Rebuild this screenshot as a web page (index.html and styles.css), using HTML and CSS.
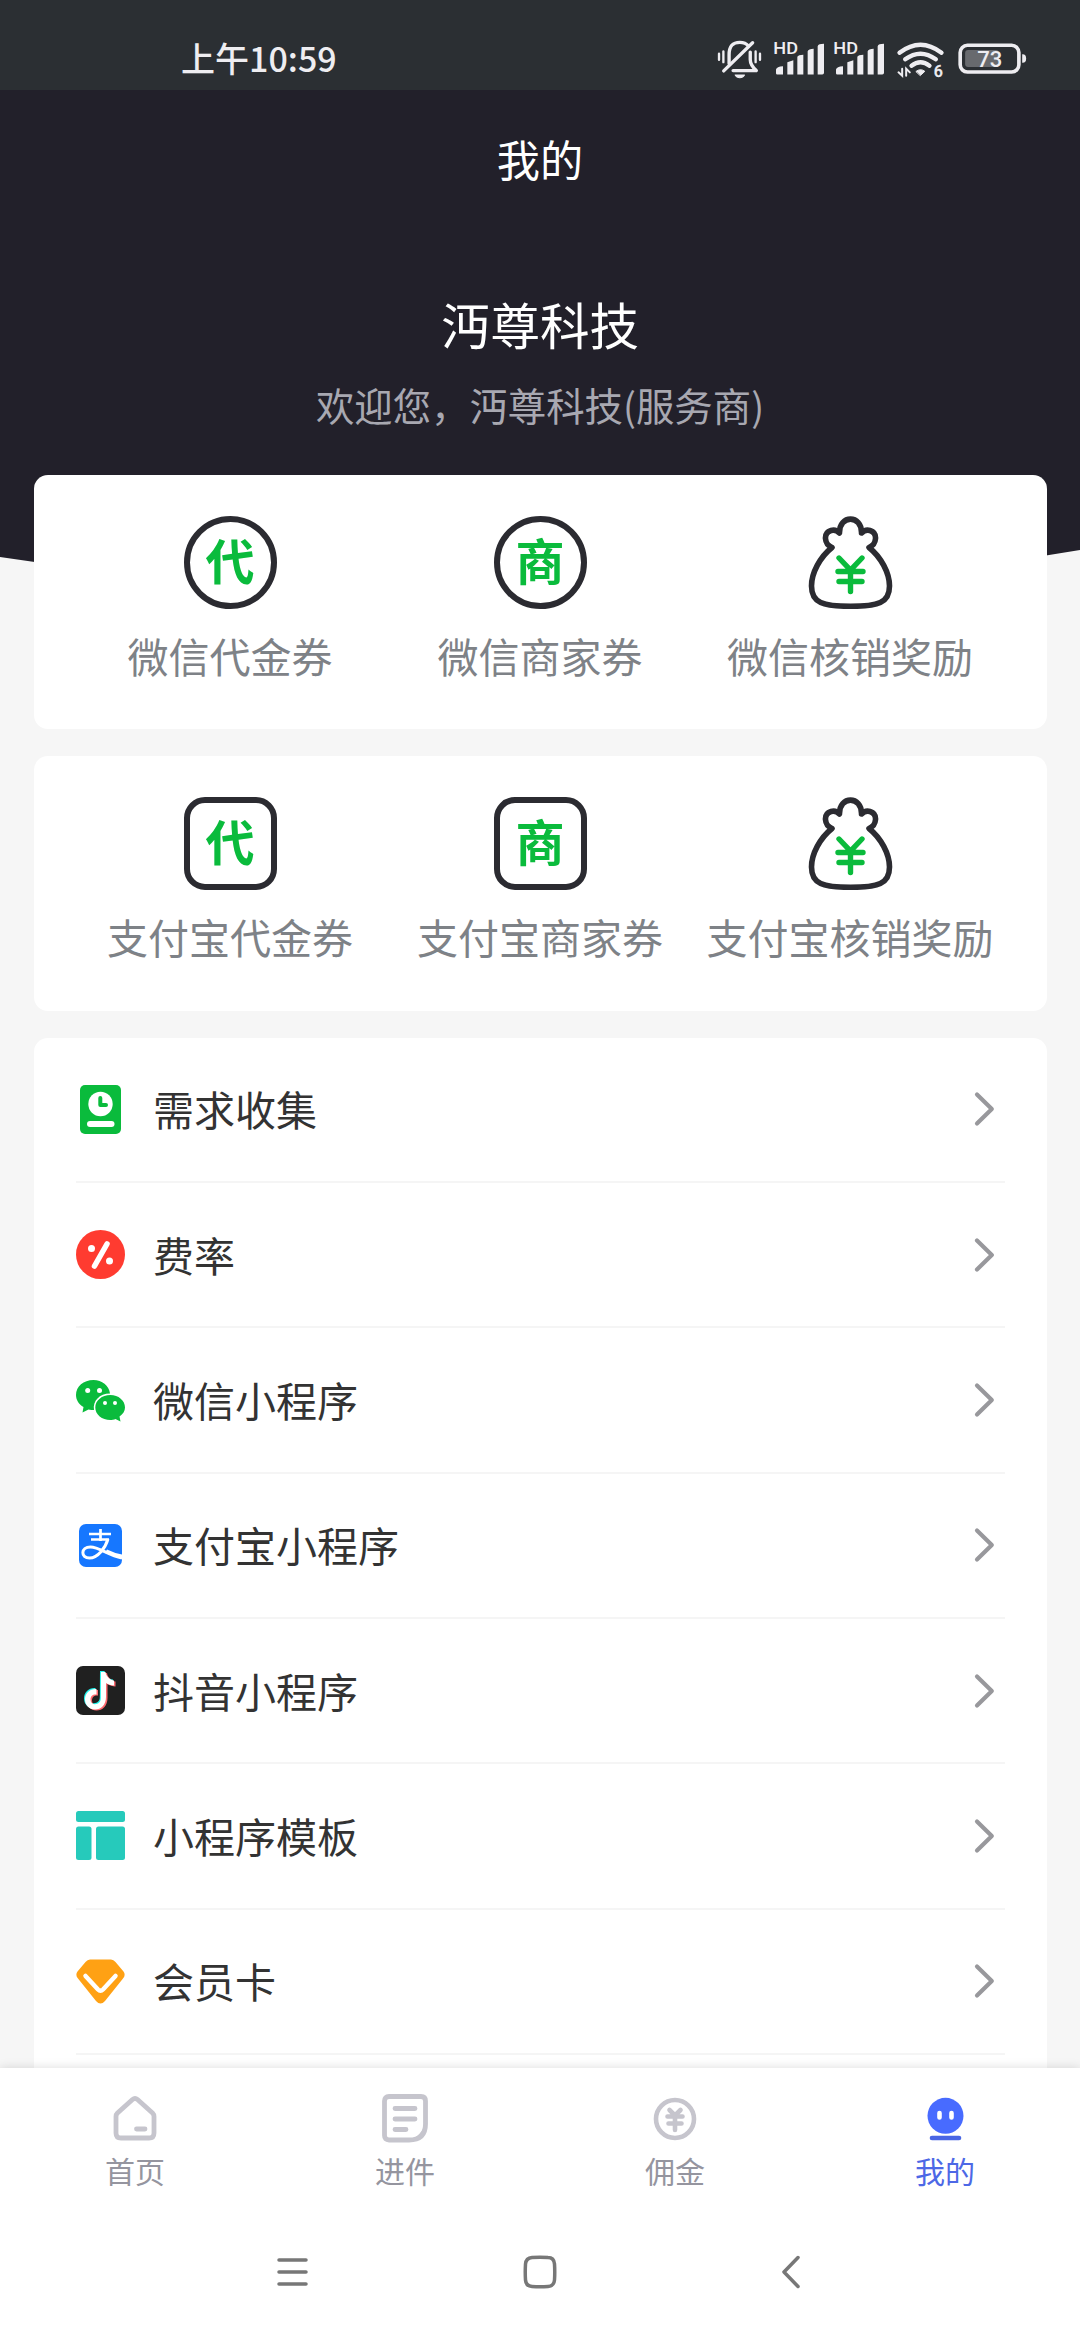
FILE: index.html
```html
<!DOCTYPE html>
<html lang="zh-CN">
<head>
<meta charset="utf-8">
<title>我的</title>
<link rel="stylesheet" href="styles.css">
</head>
<body>
<svg width="0" height="0" class="defs">
  <symbol id="bag" viewBox="0 0 93 93">
    <path d="M28 31.500C20 28 19 17 27 14.500C30 13.700 33 14.300 35.500 17C35 -1.500 58 -1.500 57.500 17C60 14.300 63 13.700 66 14.500C74 17 73 28 65 31.500C77 41 85.500 57 85.500 70C85.500 87 74 90.300 46.500 90.300C19 90.300 7.500 87 7.500 70C7.500 57 16 41 28 31.500Z" fill="none" stroke="#2b2b31" stroke-width="5.600" stroke-linejoin="round"/>
    <path d="M35 42L46.500 54L58 42M34 55.500H59M35 65.500H58M46.500 55V75.500" fill="none" stroke="#0abb3c" stroke-width="5.400" stroke-linecap="round"/>
  </symbol>
  <symbol id="chevron" viewBox="0 0 24 36">
    <path d="M5 3.500L19.800 18L5 32.500" fill="none" stroke="#98989c" stroke-width="4.200" stroke-linecap="round" stroke-linejoin="round"/>
  </symbol>
  <symbol id="note" viewBox="0 0 30 40">
    <path d="M16 1H20.500C21 5 24.500 9 29 9.500V14.500C26 14.500 23 13.300 21 12V26C21 34 16 38.500 10 38.500C4 38.500 0 34 0 28.500C0 22 5 17.500 11.500 18V23.500C8 23 5.500 25 5.500 28.500C5.500 31.500 7.500 33.200 10 33.200C13.500 33.200 15.800 31 15.800 27Z"/>
  </symbol>
</svg>

<header class="status">
  <time class="clock">上午10:59</time>
  <div class="signals">
    <svg class="bell" viewBox="112 62 134 116" fill="none" stroke="#eeedf1" stroke-linecap="round" stroke-linejoin="round">
      <path d="M148 132V106C148 78 160 69 180 69C192 69 200 73 206 80M211 98V120C211 133 218 143 229 153H160" stroke-width="10"/>
      <path d="M218 70L132 154" stroke-width="10"/>
      <path d="M118 103V121M131 96V128M227 96V128M240 103V121" stroke-width="7"/>
      <path d="M166 166H194C188 177 172 177 166 166Z" fill="#eeedf1" stroke-width="3"/>
    </svg>
    <svg class="bars" viewBox="282 68 150 98" fill="#eeedf1">
      <text x="280" y="104" font-size="48" textLength="74" lengthAdjust="spacingAndGlyphs">HD</text>
      <path d="M288 150Q290 141 309 140V165H292Q288 165 288 161ZM322 128L340 122V165H322ZM352 112Q355 106 370 106V165H352ZM383 95Q385 89 401 88V165H383ZM413 80Q415 73 432 73V160Q432 165 427 165H413Z"/>
    </svg>
    <svg class="bars second" viewBox="282 68 150 98" fill="#eeedf1">
      <text x="280" y="104" font-size="48" textLength="74" lengthAdjust="spacingAndGlyphs">HD</text>
      <path d="M288 150Q290 141 309 140V165H292Q288 165 288 161ZM322 128L340 122V165H322ZM352 112Q355 106 370 106V165H352ZM383 95Q385 89 401 88V165H383ZM413 80Q415 73 432 73V160Q432 165 427 165H413Z"/>
    </svg>
    <svg class="wifi" viewBox="650 66 140 108" fill="none" stroke="#eeedf1" stroke-linecap="round">
      <path d="M657 98Q720 50 783 98M674 118Q720 84 766 118M693 137Q720 117 747 137" stroke-width="13"/>
      <path d="M707 154Q720 144 733 154L720 166Z" fill="#eeedf1" stroke-width="3"/>
      <path d="M654 157L665 167V146M677 167V146L688 157" stroke-width="6"/>
      <text x="760" y="171" font-size="48" fill="#eeedf1" stroke="#eeedf1" stroke-width="1">6</text>
    </svg>
    <svg class="battery" viewBox="832 70 208 94">
      <rect x="838" y="77" width="178" height="81" rx="22" fill="none" stroke="#eeedf1" stroke-width="11"/>
      <rect x="853" y="91" width="102" height="52" rx="9" fill="#686a6e"/>
      <path d="M1026 104Q1038 103 1038 117T1026 130Z" fill="#eeedf1"/>
      <text x="928" y="143" font-size="67" fill="#eeedf1" text-anchor="middle">73</text>
    </svg>
  </div>
</header>

<main class="screen">
  <section class="hero">
    <h1>我的</h1>
    <h2>沔尊科技</h2>
    <p>欢迎您，沔尊科技(服务商)</p>
  </section>

  <div class="content">
    <section class="card grid">
      <a class="entry"><span class="badge round">代</span><span>微信代金券</span></a>
      <a class="entry"><span class="badge round">商</span><span>微信商家券</span></a>
      <a class="entry"><svg class="bag"><use href="#bag"/></svg><span>微信核销奖励</span></a>
    </section>
    <section class="card grid">
      <a class="entry"><span class="badge">代</span><span>支付宝代金券</span></a>
      <a class="entry"><span class="badge">商</span><span>支付宝商家券</span></a>
      <a class="entry"><svg class="bag"><use href="#bag"/></svg><span>支付宝核销奖励</span></a>
    </section>

    <section class="card list">
      <a class="row">
        <svg class="icon" viewBox="0 0 49 49"><rect x="4" y="0" width="41" height="49" rx="5" fill="#0abb3c"/><circle cx="24.500" cy="19" r="12.200" fill="#fff"/><path d="M24.300 13V20H30" fill="none" stroke="#0abb3c" stroke-width="4" stroke-linecap="round" stroke-linejoin="round"/><path d="M14 39H35.500" stroke="#fff" stroke-width="6" stroke-linecap="round"/></svg>
        <span>需求收集</span><svg class="chevron"><use href="#chevron"/></svg>
      </a>
      <a class="row">
        <svg class="icon" viewBox="0 0 49 49"><circle cx="24.500" cy="24.500" r="24.500" fill="#ff3b30"/><path d="M31 14L18.500 36" stroke="#fff" stroke-width="5.500" stroke-linecap="round"/><circle cx="15.500" cy="18.500" r="3.500" fill="#fff"/><circle cx="33.500" cy="31" r="3.500" fill="#fff"/></svg>
        <span>费率</span><svg class="chevron"><use href="#chevron"/></svg>
      </a>
      <a class="row">
        <svg class="icon" viewBox="0 0 49 49"><path d="M17.500 4C7.500 4 0 10.500 0 19C0 24 3 28.500 7.500 31L6.500 36.500L12.500 33.500C14.500 34 16.500 34 18 34C16.500 25 23.500 17.500 34 17.500C33 9.500 26 4 17.500 4Z" fill="#0abb3c"/><path d="M34.300 19C26 19 19.300 24.500 19.300 31.500S26 44 34.300 44C36 44 38 43.600 39.500 43L44.500 45.500L43.500 40.500C47 38 49 35 49 31.500C49 24.500 42.500 19 34.300 19Z" fill="#0abb3c"/><g fill="#fff"><circle cx="11.700" cy="14.500" r="2.500"/><circle cx="23.500" cy="14.500" r="2.500"/><circle cx="29" cy="27" r="2"/><circle cx="39" cy="27" r="2"/></g></svg>
        <span>微信小程序</span><svg class="chevron"><use href="#chevron"/></svg>
      </a>
      <a class="row">
        <svg class="icon" viewBox="0 0 49 49"><rect x="3" y="3" width="43" height="43" rx="7" fill="#1677ff"/><path d="M24.500 8V20M13 13H35M15 18.500H33" fill="none" stroke="#fff" stroke-width="2.700"/><path d="M32 18C29.500 26.500 22 37 13.500 37C4.500 37 4.500 26 14.500 26C23 26 32 34 46 37" fill="none" stroke="#fff" stroke-width="3"/><path d="M31 28.500Q38 32 46 33.500V38L29 32Z" fill="#fff"/></svg>
        <span>支付宝小程序</span><svg class="chevron"><use href="#chevron"/></svg>
      </a>
      <a class="row">
        <svg class="icon" viewBox="0 0 49 49"><rect width="49" height="49" rx="7" fill="#202020"/><use href="#note" x="8" y="4" width="30" height="40" fill="#25f4ee"/><use href="#note" x="10.500" y="6" width="30" height="40" fill="#fe6a70"/><use href="#note" x="9" y="5" width="30" height="40" fill="#fff"/></svg>
        <span>抖音小程序</span><svg class="chevron"><use href="#chevron"/></svg>
      </a>
      <a class="row">
        <svg class="icon" viewBox="0 0 49 49" fill="#26cabb"><rect width="49" height="11" rx="2.500"/><rect y="15.500" width="15.500" height="33.500" rx="2.500"/><rect x="20" y="15.500" width="29" height="33.500" rx="2.500"/></svg>
        <span>小程序模板</span><svg class="chevron"><use href="#chevron"/></svg>
      </a>
      <a class="row">
        <svg class="icon" viewBox="0 0 49 49"><path d="M14 2.500H35Q37.500 2.500 39.500 5L47.500 14.500Q50 18 47 21.500L29 44Q24.500 49 20 44L2 21.500Q-1 18 1.500 14.500L9.500 5Q11.500 2.500 14 2.500Z" fill="#ffa114"/><path d="M9.500 19L22 32.500Q24.500 35 27 32.500L39.500 19" fill="none" stroke="#fff" stroke-width="4.500" stroke-linecap="round"/></svg>
        <span>会员卡</span><svg class="chevron"><use href="#chevron"/></svg>
      </a>
    </section>
  </div>
</main>

<nav class="tabs">
  <a class="tab"><svg viewBox="0 0 50 50" fill="none" stroke="#c6c5cd" stroke-width="4.800" stroke-linejoin="round" stroke-linecap="round"><path d="M22.500 6.500Q25 4.300 27.500 6.500L42.500 20Q44 21.500 44 23.500V40Q44 45 39 45H11Q6 45 6 40V23.500Q6 21.500 7.500 20Z"/><path d="M26.500 36H35"/></svg><span>首页</span></a>
  <a class="tab"><svg viewBox="0 0 50 50" fill="none" stroke="#c6c5cd" stroke-width="4.800" stroke-linejoin="round" stroke-linecap="round"><path d="M9 3.500H41Q45.500 3.500 45.500 8V31Q45.500 47 29 47H9Q4.500 47 4.500 42.500V8Q4.500 3.500 9 3.500Z"/><path d="M45 34Q41 43 33 47H29Q45.500 47 45.500 31Z" fill="#c6c5cd" stroke-width="2"/><path d="M15 15.500H35M15 26H35M15 36.500H26"/></svg><span>进件</span></a>
  <a class="tab"><svg viewBox="0 0 50 50" fill="none" stroke="#c6c5cd" stroke-width="4.600" stroke-linecap="round"><circle cx="25" cy="26" r="19"/><path d="M19.500 17L25 22.500L30.500 17M17.500 23.500H32.500M18.500 30.500H31.500M25 23V37"/></svg><span>佣金</span></a>
  <a class="tab active"><svg viewBox="0 0 50 50"><circle cx="25.500" cy="22.800" r="18" fill="#486bff"/><path d="M12 45H39" stroke="#4a66e4" stroke-width="4.600" stroke-linecap="round"/><path d="M19.500 20V24.500M31.500 20V24.500" stroke="#fff" stroke-width="4.600" stroke-linecap="round"/></svg><span>我的</span></a>
</nav>

<footer class="system">
  <svg viewBox="0 0 34 34"><path d="M4 5H31M4 17H31M4 29H31"/></svg>
  <svg viewBox="0 0 34 34"><path d="M9 2.500Q17 1.800 25 2.500Q31 2.500 31.500 9Q32 17 31.500 25Q31 31 25 31.500Q17 32 9 31.500Q3 31 2.500 25Q2 17 2.500 9Q3 3 9 2.500Z"/></svg>
  <svg viewBox="0 0 34 34"><path d="M27 2.500L13 17L27 31.500"/></svg>
</footer>
</body>
</html>
```

FILE: styles.css
```css
* { box-sizing: border-box; }

body {
  margin: 0;
  width: 1080px;
  height: 2340px;
  overflow: hidden;
  display: flex;
  flex-direction: column;
  background: #f6f6f6;
  font-family: "Noto Sans CJK SC", sans-serif;
}

svg { display: block; flex: none; }
.defs { display: none; }

.status {
  flex: none;
  height: 90px;
  padding: 0 53px 0 181px;
  display: flex;
  align-items: flex-start;
  justify-content: space-between;
  background: #2b2f33;
  color: #eeedf1;
}
.clock { margin-top: 33px; font-size: 34px; line-height: 50px; font-weight: 500; }
.signals { display: flex; align-items: flex-start; font-family: Roboto, sans-serif; font-weight: 500; }
.signals svg { overflow: visible; }
.bell { width: 45px; height: 39px; margin: 40px 12px 0 0; }
.bars { width: 50px; height: 33px; margin: 42px 10px 0 0; }
.second { margin-right: 13px; }
.wifi { width: 47px; height: 36px; margin: 42px 14px 0 0; }
.battery { width: 69px; height: 31px; margin-top: 43px; }

.screen {
  flex: none;
  height: 1978px;
  overflow: hidden;
  display: flex;
  flex-direction: column;
}

.hero {
  flex: none;
  height: 480px;
  background: #22202a;
  clip-path: path("M0 0H1080V460Q540 550 0 467Z");
  color: #fff;
  text-align: center;
}
.hero h1, .hero h2, .hero p { margin: 0; font-weight: 400; }
.hero h1 { padding-top: 33px; font-size: 43.2px; line-height: 70px; }
.hero h2 { padding-top: 95px; font-size: 49.5px; line-height: 72px; }
.hero p { padding-top: 14px; font-size: 38.4px; line-height: 60px; color: #a8a8b1; }

.content {
  flex: 1;
  min-height: 0;
  position: relative;
  margin-top: -95px;
  padding: 0 33px 0 34px;
  display: flex;
  flex-direction: column;
  gap: 27px;
}
.card { flex: none; background: #fff; border-radius: 14px; }

.grid {
  height: 254.400px;
  padding: 41px 42px 0 41px;
  display: grid;
  grid-template-columns: repeat(3, 310px);
}
.entry {
  display: flex;
  flex-direction: column;
  align-items: center;
  gap: 16px;
  font-size: 41px;
  line-height: 60px;
  color: #7e8287;
  white-space: nowrap;
}
.badge {
  width: 93px;
  height: 93px;
  padding-bottom: 7px;
  border: 6px solid #2b2b31;
  border-radius: 21px;
  display: flex;
  align-items: center;
  justify-content: center;
  color: #0abb3c;
  font-size: 49px;
  font-weight: 700;
}
.round { border-radius: 50%; }
.bag { width: 93px; height: 93px; }

.list { flex: 1; min-height: 0; padding: 0 42px; border-radius: 14px 14px 0 0; }
.row {
  height: 145.300px;
  border-bottom: 2px solid #f5f5f5;
  display: flex;
  align-items: center;
  gap: 28px;
  color: #333;
  font-size: 41px;
  line-height: 60px;
}
.row span { flex: 1; padding-bottom: 2px; }
.icon { width: 49px; height: 49px; }
.chevron { width: 24px; height: 36px; margin-right: 9px; }

.tabs {
  flex: none;
  height: 136px;
  padding-top: 25px;
  display: grid;
  grid-template-columns: repeat(4, 270px);
  position: relative;
  background: #fff;
  box-shadow: 0 0 10px rgba(0, 0, 0, .14);
}
.tab {
  display: flex;
  flex-direction: column;
  align-items: center;
  gap: 5px;
  color: #95959f;
  font-size: 30px;
  line-height: 44px;
}
.tab svg { width: 50px; height: 50px; }
.active { color: #4d68e6; }

.system {
  flex: 1;
  position: relative;
  padding: 51px 275px 0;
  display: flex;
  align-items: flex-start;
  justify-content: space-between;
  background: #fff;
}
.system svg {
  width: 34px;
  height: 34px;
  fill: none;
  stroke: #777;
  stroke-width: 3.500;
  stroke-linecap: round;
  stroke-linejoin: round;
}
```
